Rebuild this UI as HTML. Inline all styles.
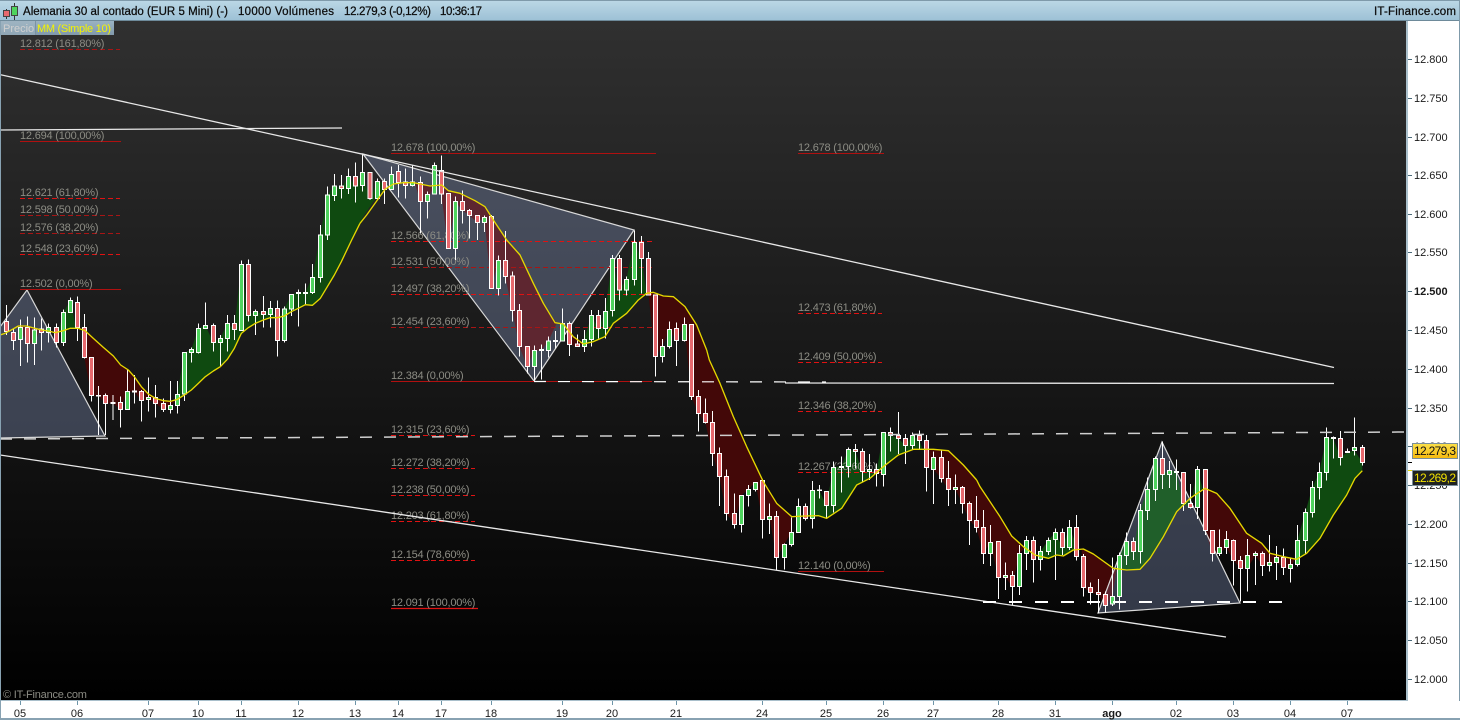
<!DOCTYPE html>
<html lang="es">
<head>
<meta charset="utf-8">
<title>Alemania 30 al contado</title>
<style>
html,body{margin:0;padding:0;background:#000;width:1460px;height:720px;overflow:hidden}
svg{display:block;font-family:"Liberation Sans",Arial,sans-serif}
.w{fill:none;stroke:#fff;stroke-width:3}
.g{fill:#4fd45e;stroke:#fff;stroke-width:3}
.r{fill:#e8696e;stroke:#fff;stroke-width:3}
.m{fill:none;stroke:#e6d800;stroke-width:4;stroke-linejoin:round}
.f{font-size:11px;fill:#8c8c84;letter-spacing:-.2px}
.ax{font-size:11px;fill:#1a1a1a}
.tt{font-size:11.5px;fill:#0c0c0c;stroke:#0c0c0c;stroke-width:.25px}
.sd{stroke:#e01212;stroke-width:1;stroke-dasharray:5 3}
.sdd{stroke:#a81515;stroke-width:1;stroke-dasharray:5 3}
.ss{stroke:#b01010;stroke-width:1}
.tl{stroke:#e8e8e8;stroke-width:1.3;fill:none}
</style>
</head>
<body>
<svg width="1460" height="720" viewBox="0 0 1460 720" xmlns="http://www.w3.org/2000/svg">
<defs>
<linearGradient id="bg" x1="0" y1="21" x2="0" y2="700" gradientUnits="userSpaceOnUse"><stop offset="0" stop-color="#303030"/><stop offset="1" stop-color="#000"/></linearGradient>
<linearGradient id="hd" x1="0" y1="0" x2="0" y2="1"><stop offset="0" stop-color="#bcd8e6"/><stop offset="1" stop-color="#9cc0d5"/></linearGradient>
<linearGradient id="tg" x1="0" y1="0" x2="0" y2="1"><stop offset="0" stop-color="#9fb4c2"/><stop offset="1" stop-color="#90a7b6"/></linearGradient>
<linearGradient id="tm" x1="0" y1="0" x2="0" y2="1"><stop offset="0" stop-color="#9ab2c2"/><stop offset="1" stop-color="#8199ac"/></linearGradient>
<linearGradient id="ye" x1="0" y1="0" x2="0" y2="1"><stop offset="0" stop-color="#fbe04a"/><stop offset="1" stop-color="#f6b90e"/></linearGradient>
<clipPath id="tri"><polygon points="0,327 27,290 105,436 0,438"/><polygon points="363,154 634,230 534,381"/><polygon points="1098,613 1162,442 1240,603"/></clipPath>
<g id="G">
<g transform="translate(0 240) scale(.33333)">
<path d="M175 275L190 217 211 181 228 265 210 265 190 272z"/>
<path d="M532 478L532 463 553 338 574 329 595 265 616 256 640 307 661 295 682 251 703 268 724 73 745 226 766 214 790 223 811 205 832 240 853 207 874 163 895 158 916 157 937 112 961 -15 982 -135 1003 -162 1024 -156 1045 -189 1066 -162 1087 -204 1110 -123 1132 -177 1165 -165 1130 -130 1090 -70 1055 0 1024 65 1003 105 982 140 961 175 937 196 916 194 895 205 874 215 853 228 832 233 811 233 790 240 766 250 745 263 724 280 703 325 682 358 661 380 640 393 616 410 595 430 574 450 553 465z"/>
</g>
<g transform="translate(360 140) scale(.33333)">
<path d="M668 612L673 598 694 526 715 566 736 514 757 355 778 450 799 418 823 307 844 355 860 460 835 480 800 520 760 550 735 590 700 605z"/>
</g>
<g transform="translate(680 360) scale(.33333)">
<path d="M385 467L397 391 418 391 439 437 460 322 484 319 505 268 526 274 547 335 568 328 589 340 610 217 631 226 655 235 676 257 697 226 718 241 728 268 700 268 655 285 610 320 570 355 530 375 485 445 440 475 415 467z"/>
</g>
<g transform="translate(980 400) scale(.33333)">
<path d="M135 445L139 421 160 478 181 454 205 421 226 397 247 442 268 382 295 448 280 450 250 468 230 465 205 475 165 465z"/>
<path d="M412 507L418 466 439 424 460 454 481 331 502 268 526 175 547 223 568 211 589 214 610 312 631 322 652 208 668 266 630 295 590 335 550 410 510 475 480 508 440 510z"/>
<path d="M950 478L952 421 976 337 997 262 1018 217 1039 112 1060 115 1081 172 1102 157 1123 151 1147 187 1147 212 1125 235 1100 285 1060 345 1020 415 980 460z"/>
</g>
</g>
<g id="R">
<g transform="translate(0 240) scale(.33333)">
<path d="M55 258L82 310 103 310 120 270 80 258z"/>
<path d="M245 266L253 353 274 466 295 468 316 490 339 490 361 508 382 454 403 456 424 482 445 479 466 490 490 508 511 496 530 480 511 484 490 482 466 475 445 462 424 440 403 410 385 390 362 375 340 348 310 322 280 295 255 272z"/>
</g>
<g transform="translate(360 140) scale(.33333)">
<path d="M165 130L181 184 202 184 222 137 210 138 180 132z"/>
<path d="M244 136L244 162 265 325 286 184 307 211 328 226 352 248 373 232 394 445 415 361 436 410 457 512 478 620 502 680 523 631 544 632 565 603 590 550 550 490 520 430 480 345 440 300 400 240 375 200 345 182 300 160 265 152z"/>
<path d="M615 555L628 613 652 620 668 612 640 590z"/>
</g>
<g transform="translate(680 360) scale(.33333)">
<path d="M-95 -200L-74 -10 -53 -41 -32 -92 -11 -58 13 -107 34 110 55 160 76 188 97 280 118 350 139 460 163 493 184 406 205 388 226 367 247 478 268 469 289 593 313 553 334 517 338 470 290 430 250 365 200 260 160 170 120 70 88 0 80 -30 50 -105 15 -160 -20 -190 -50 -192 -80 -203z"/>
</g>
<g transform="translate(980 400) scale(.33333)">
<path d="M-165 148L-161 202 -140 208 -116 236 -95 268 -74 268 -53 310 -32 362 -11 382 10 460 31 427 55 532 76 532 97 559 118 460 135 445 130 440 95 408 60 350 30 305 0 260 -10 240 -50 195 -95 152 -140 148z"/>
<path d="M305 447L310 562 331 577 355 583 376 616 397 589 410 507 400 505 340 462z"/>
<path d="M672 265L676 391 697 460 718 460 739 442 760 481 781 505 802 505 826 466 847 496 868 496 889 487 910 502 931 505 945 478 910 470 870 460 845 430 800 400 750 325 710 280z"/>
</g>
</g>
</defs>

<!-- chart background -->
<rect x="0" y="21" width="1407" height="681" fill="url(#bg)"/>

<!-- MA cloud -->
<use href="#G" fill="#0f4a10"/>
<use href="#R" fill="#430808"/>

<!-- triangles -->
<polygon points="0,327 27,290 105,436 0,438" fill="#8d9ecb" fill-opacity=".34"/>
<polygon points="363,154 634,230 534,381" fill="#8d9ecb" fill-opacity=".34"/>
<polygon points="1098,613 1162,442 1240,603" fill="#8d9ecb" fill-opacity=".34"/>
<g clip-path="url(#tri)">
<use href="#G" fill="#205f2a"/>
<use href="#R" fill="#5e2630"/>
</g>
<g fill="none" stroke="#d8d8d8" stroke-width="1.2">
<polyline points="0,327 27,290 105,436 0,438"/>
<polygon points="363,154 634,230 534,381"/>
<polygon points="1098,613 1162,442 1240,603"/>
</g>

<!-- fibonacci levels -->
<g>
<line x1="20" y1="49.5" x2="120" y2="49.5" class="sdd"/>
<line x1="20" y1="141.5" x2="121" y2="141.5" class="ss"/>
<line x1="20" y1="198.5" x2="120" y2="198.5" class="sd"/>
<line x1="20" y1="215.5" x2="120" y2="215.5" class="sdd"/>
<line x1="20" y1="233.5" x2="120" y2="233.5" class="sdd"/>
<line x1="20" y1="254.5" x2="120" y2="254.5" class="sd"/>
<line x1="20" y1="289.5" x2="121" y2="289.5" class="ss"/>
<line x1="391" y1="153.5" x2="656" y2="153.5" class="ss"/>
<line x1="391" y1="241.5" x2="652" y2="241.5" class="sd"/>
<line x1="391" y1="267.5" x2="652" y2="267.5" class="sdd"/>
<line x1="391" y1="294.5" x2="652" y2="294.5" class="sd"/>
<line x1="391" y1="327.5" x2="652" y2="327.5" class="sdd"/>
<line x1="391" y1="381.5" x2="652" y2="381.5" class="ss"/>
<line x1="391" y1="435.5" x2="475" y2="435.5" class="sd"/>
<line x1="391" y1="468.5" x2="475" y2="468.5" class="sd"/>
<line x1="391" y1="495.5" x2="475" y2="495.5" class="sd"/>
<line x1="391" y1="521.5" x2="475" y2="521.5" class="sd"/>
<line x1="391" y1="560.5" x2="475" y2="560.5" class="sd"/>
<line x1="391" y1="608.5" x2="478" y2="608.5" stroke="#e01212" stroke-width="1.2"/>
<line x1="798" y1="153.5" x2="884" y2="153.5" class="ss"/>
<line x1="798" y1="313.5" x2="882" y2="313.5" class="sd"/>
<line x1="798" y1="362.5" x2="882" y2="362.5" class="sd"/>
<line x1="798" y1="411.5" x2="882" y2="411.5" class="sd"/>
<line x1="798" y1="472.5" x2="882" y2="472.5" class="sd"/>
<line x1="798" y1="571.5" x2="884" y2="571.5" class="ss"/>
</g>
<g class="f">
<text x="20" y="47">12.812 (161,80%)</text>
<text x="20" y="139">12.694 (100,00%)</text>
<text x="20" y="196">12.621 (61,80%)</text>
<text x="20" y="213">12.598 (50,00%)</text>
<text x="20" y="231">12.576 (38,20%)</text>
<text x="20" y="252">12.548 (23,60%)</text>
<text x="20" y="287">12.502 (0,00%)</text>
<text x="391" y="151">12.678 (100,00%)</text>
<text x="391" y="239">12.566 (61,80%)</text>
<text x="391" y="265">12.531 (50,00%)</text>
<text x="391" y="292">12.497 (38,20%)</text>
<text x="391" y="325">12.454 (23,60%)</text>
<text x="391" y="379">12.384 (0,00%)</text>
<text x="391" y="433">12.315 (23,60%)</text>
<text x="391" y="466">12.272 (38,20%)</text>
<text x="391" y="493">12.238 (50,00%)</text>
<text x="391" y="519">12.203 (61,80%)</text>
<text x="391" y="558">12.154 (78,60%)</text>
<text x="391" y="606">12.091 (100,00%)</text>
<text x="798" y="151">12.678 (100,00%)</text>
<text x="798" y="311">12.473 (61,80%)</text>
<text x="798" y="360">12.409 (50,00%)</text>
<text x="798" y="409">12.346 (38,20%)</text>
<text x="798" y="470">12.267 (23,60%)</text>
<text x="798" y="569">12.140 (0,00%)</text>
</g>

<!-- candles -->
<g shape-rendering="crispEdges">
<g transform="translate(0 240) scale(.33333)">
<path class="w" d="M19 195V285M40 265V330M61 238V378M82 230V368M103 232V375M124 236V332M145 250V308M169 250V322M190 208V318M211 172V218M232 170V303M253 222V355M274 352V485M295 438V585M316 460V585M339 465V540M361 470V563M382 388V508M403 405V490M424 450V545M445 412V515M466 435V532M490 475V516M511 423V520M532 423V520M553 338V483M574 322V368M595 250V340M616 188V263M640 250V335M661 285V380M682 225V335M703 225V300M724 62V272M745 58V245M766 208V285M790 168V262M811 183V262M832 182V350M853 200V308M874 162V228M895 148V260M916 130V195M937 72V162M961 -45V128"/>
<path class="g" d="M55 263h12V298h-12zM97 270h12V310h-12zM139 262h12V278h-12zM184 217h12V308h-12zM205 181h12V217h-12zM376 454h12V508h-12zM439 472h12V479h-12zM505 496h12V508h-12zM526 463h12V496h-12zM547 338h12V462h-12zM568 329h12V338h-12zM589 265h12V338h-12zM610 256h12V265h-12zM655 295h12V307h-12zM676 251h12V295h-12zM718 73h12V272h-12zM760 214h12V226h-12zM805 205h12V223h-12zM847 207h12V301h-12zM868 163h12V207h-12zM889 158h12V161h-12zM910 157h12V160h-12zM931 112h12V157h-12zM955 -15h12V112h-12z"/>
<path class="r" d="M13 245h12V275h-12zM34 278h12V302h-12zM76 262h12V310h-12zM118 267h12V278h-12zM163 262h12V308h-12zM226 187h12V262h-12zM247 262h12V353h-12zM268 352h12V466h-12zM289 466h12V468h-12zM310 466h12V490h-12zM333 487h12V490h-12zM355 487h12V508h-12zM397 453h12V456h-12zM418 454h12V482h-12zM460 472h12V490h-12zM484 490h12V508h-12zM634 256h12V307h-12zM697 250h12V268h-12zM739 73h12V226h-12zM784 214h12V223h-12zM826 205h12V301h-12z"/>
</g>
<g transform="scale(.33333)">
<path class="w" d="M982 560V720M1003 522V603M1024 525V595M1045 505V582M1066 488V608"/>
<path class="g" d="M976 585h12V705h-12zM997 558h12V586h-12zM1039 530h12V566h-12z"/>
<path class="r" d="M1018 558h12V565h-12zM1060 530h12V558h-12z"/>
</g>
<g transform="translate(360 140) scale(.33333)">
<path class="w" d="M8 42V155M30 97V180M52 115V180M73 115V192M94 80V150M115 75V172M136 85V175M157 75V140M181 110V280M202 155V235M223 68V163M244 47V192M265 160V325M286 170V360M307 152V250M328 207V295M352 225V300M373 226V276M394 225V445M415 346V467M436 273V430M457 395V545M478 492V650M502 618V700M523 616V722M544 613V718M565 590V652M586 573V625M607 505V605M628 545V648M652 583V620M673 570V636M694 510V620M715 510V595M736 474V595M757 345V530M778 345V482M799 410V467M823 272V437M844 288V460M865 336V465M886 465V710M907 597V668M928 545V625M949 547V678M973 532V605M994 553V780"/>
<path class="g" d="M2 97h12V136h-12zM46 124h12V176h-12zM88 103h12V149h-12zM151 126h12V136h-12zM196 163h12V184h-12zM217 76h12V162h-12zM280 184h12V325h-12zM367 232h12V248h-12zM409 361h12V445h-12zM517 631h12V680h-12zM538 629h12V632h-12zM559 603h12V632h-12zM580 601h12V604h-12zM601 550h12V603h-12zM667 598h12V620h-12zM688 526h12V598h-12zM730 514h12V566h-12zM751 355h12V512h-12zM793 418h12V450h-12zM817 307h12V418h-12zM901 619h12V650h-12zM922 568h12V620h-12zM967 553h12V602h-12z"/>
<path class="r" d="M24 97h12V176h-12zM67 124h12V149h-12zM109 94h12V127h-12zM130 126h12V136h-12zM175 127h12V184h-12zM238 92h12V162h-12zM259 160h12V325h-12zM301 184h12V211h-12zM322 211h12V226h-12zM346 226h12V248h-12zM388 230h12V445h-12zM430 361h12V410h-12zM451 408h12V512h-12zM472 512h12V620h-12zM496 620h12V680h-12zM622 550h12V613h-12zM646 612h12V620h-12zM709 526h12V566h-12zM772 355h12V450h-12zM838 307h12V355h-12zM859 355h12V465h-12zM880 465h12V650h-12zM943 565h12V602h-12zM988 553h12V770h-12z"/>
</g>
<g transform="translate(680 360) scale(.33333)">
<path class="w" d="M55 90V215M76 115V190M97 153V318M118 262V438M139 328V482M163 400V505M184 405V518M205 375V440M226 366V395M247 360V535M268 430V522M289 453V630M313 550V628M334 472V560M355 415V518M376 430V482M397 363V505M418 375V415M439 395V473M460 305V457M484 290V397M505 262V353M526 252V325M547 265V365M568 282V360M589 310V380M610 216V380M631 202V275M655 156V282M676 222V312M697 217V268M718 212V270M739 225V395M760 275V432M784 268V367M805 303V438M826 343V432M847 378V460M868 425V555M889 408V518"/>
<path class="g" d="M178 406h12V493h-12zM199 388h12V406h-12zM220 367h12V388h-12zM262 469h12V478h-12zM307 553h12V593h-12zM328 517h12V553h-12zM349 439h12V517h-12zM391 391h12V475h-12zM412 390h12V392h-12zM454 322h12V437h-12zM478 319h12V322h-12zM499 268h12V319h-12zM562 328h12V334h-12zM604 217h12V343h-12zM691 226h12V257h-12zM754 292h12V328h-12zM820 382h12V388h-12z"/>
<path class="r" d="M49 110h12V160h-12zM70 160h12V188h-12zM91 188h12V280h-12zM112 280h12V350h-12zM133 349h12V460h-12zM157 460h12V493h-12zM241 361h12V478h-12zM283 469h12V593h-12zM370 439h12V475h-12zM433 394h12V437h-12zM520 268h12V274h-12zM541 274h12V335h-12zM583 328h12V340h-12zM625 217h12V226h-12zM649 226h12V235h-12zM670 235h12V257h-12zM712 226h12V241h-12zM733 241h12V322h-12zM778 292h12V356h-12zM799 356h12V388h-12zM841 382h12V430h-12zM862 430h12V482h-12zM883 481h12V502h-12z"/>
</g>
<g transform="translate(980 400) scale(.33333)">
<path class="w" d="M10 330V492M31 375V498M55 424V597M76 487V570M97 513V615M118 435V585M139 408V510M160 410V548M181 438V512M205 412V465M226 385V540M247 385V465M268 360V450M289 345V482M310 462V590M331 548V614M355 537V640M376 575V638M397 472V618M418 457V628M439 397V495M460 412V480M481 312V490M502 232V360M526 170V303M547 125V267M568 183V264M589 178V270M610 217V333M631 252V325M652 198V357M676 208V405M697 390V485M718 388V468M739 393V462M760 418V557M781 468V605M802 417V575M826 455V555M847 455V528M868 405V515M889 438V540M910 445V525M931 472V548M952 375V500M976 325V460M997 243V352M1018 187V298M1039 82V242M1060 110V175M1081 93V197M1102 145V157M1123 52V167M1147 135V197"/>
<path class="g" d="M25 427h12V460h-12zM70 526h12V532h-12zM112 460h12V559h-12zM133 421h12V460h-12zM175 454h12V478h-12zM199 421h12V454h-12zM220 397h12V418h-12zM262 382h12V442h-12zM391 589h12V612h-12zM412 466h12V589h-12zM433 424h12V466h-12zM475 331h12V454h-12zM496 268h12V331h-12zM520 175h12V268h-12zM562 211h12V223h-12zM583 214h12V217h-12zM646 208h12V322h-12zM712 442h12V460h-12zM733 418h12V442h-12zM796 466h12V505h-12zM820 460h12V466h-12zM862 487h12V496h-12zM883 472h12V487h-12zM925 493h12V505h-12zM946 421h12V493h-12zM970 337h12V421h-12zM991 262h12V337h-12zM1012 217h12V262h-12zM1033 112h12V217h-12zM1054 112h12V115h-12zM1096 154h12V157h-12zM1117 142h12V151h-12z"/>
<path class="r" d="M4 382h12V460h-12zM49 424h12V532h-12zM91 526h12V559h-12zM154 421h12V478h-12zM241 397h12V442h-12zM283 382h12V469h-12zM304 469h12V562h-12zM325 562h12V577h-12zM349 577h12V583h-12zM370 583h12V616h-12zM454 424h12V454h-12zM541 175h12V223h-12zM604 217h12V310h-12zM625 310h12V322h-12zM670 208h12V391h-12zM691 391h12V460h-12zM754 421h12V481h-12zM775 481h12V505h-12zM841 460h12V496h-12zM904 472h12V502h-12zM1075 115h12V172h-12zM1141 142h12V187h-12z"/>
</g>
</g>

<!-- trend lines -->
<g class="tl">
<line x1="0" y1="74.6" x2="1334" y2="367.5"/>
<line x1="0" y1="455" x2="1226" y2="637"/>
<line x1="0" y1="130" x2="342" y2="128"/>
<line x1="785" y1="383" x2="1334" y2="383.5"/>
</g>
<line x1="0" y1="439" x2="1406" y2="432" stroke="#cfcfcf" stroke-width="1.5" stroke-dasharray="12 12"/>
<line x1="534" y1="381.5" x2="826" y2="382" stroke="#fff" stroke-width="1.2" stroke-dasharray="12 12"/>
<line x1="983" y1="602" x2="1282" y2="602" stroke="#fff" stroke-width="2" stroke-dasharray="13 13"/>

<!-- moving average -->
<g transform="translate(0 240) scale(.33333)"><polyline class="m" points="0,285 15,280 30,272 55,258 80,258 105,265 125,270 145,273 165,278 190,272 210,265 235,265 255,272 280,295 310,322 340,348 362,375 385,390 403,410 424,440 445,462 466,475 490,482 511,484 532,478 553,465 574,450 595,430 616,410 640,393 661,380 682,358 703,325 724,280 745,263 766,250 790,240 811,233 832,233 853,228 874,215 895,205 916,194 937,196 961,175 982,140 1003,105 1024,65 1055,0 1080,-50"/></g>
<g transform="translate(360 140) scale(.33333)"><polyline class="m" points="0,250 20,225 45,190 75,148 100,132 130,128 160,128 180,132 210,138 245,135 265,152 300,160 345,182 375,200 400,240 440,300 480,345 520,430 550,490 585,548 610,552 640,590 670,612 700,605 735,590 760,550 800,520 835,480 860,460 880,457 910,468 940,470 975,500 1010,555 1040,630"/></g>
<g transform="translate(680 360) scale(.33333)"><polyline class="m" points="80,-30 88,0 120,70 160,170 200,260 250,365 290,430 335,470 375,468 415,467 440,475 485,445 530,375 570,355 610,320 655,285 700,268 760,268 805,272 850,315 890,360"/></g>
<g transform="translate(980 400) scale(.33333)"><polyline class="m" points="-10,240 0,260 30,305 60,350 95,408 130,440 165,465 205,475 230,465 250,468 280,450 310,447 340,462 400,505 440,510 480,508 510,475 550,410 590,335 630,295 675,265 710,280 750,325 800,400 845,430 870,460 910,470 950,478 980,460 1020,415 1060,345 1100,285 1125,235 1147,212"/></g>

<!-- title bar -->
<rect x="0" y="0" width="1460" height="21" fill="url(#hd)"/>
<rect x="0" y="0" width="1460" height="1" fill="#7f9aaa"/>
<rect x="0" y="20" width="1460" height="1" fill="#6e8a9a"/>
<g>
<line x1="6.5" y1="9" x2="6.5" y2="19" stroke="#333"/>
<rect x="3.5" y="10.5" width="6" height="6" fill="#e8696e" stroke="#444"/>
<line x1="14.5" y1="3" x2="14.5" y2="20" stroke="#333"/>
<rect x="11.5" y="6.5" width="6" height="9" fill="#4fd45e" stroke="#444"/>
</g>
<g class="tt">
<text x="23" y="15" textLength="205" lengthAdjust="spacing">Alemania 30 al contado (EUR 5 Mini) (-)</text>
<text x="238" y="15" textLength="96" lengthAdjust="spacing">10000 Volúmenes</text>
<text x="344" y="15" textLength="87" lengthAdjust="spacing">12.279,3 (-0,12%)</text>
<text x="440" y="15" textLength="42" lengthAdjust="spacing">10:36:17</text>
<text x="1374" y="15" textLength="82" lengthAdjust="spacing">IT-Finance.com</text>
</g>

<!-- legend tags -->
<rect x="1" y="21" width="34" height="14" fill="url(#tg)"/>
<rect x="35" y="21" width="79" height="14" fill="url(#tm)"/>
<rect x="35" y="21" width="1" height="14" fill="#7a92a2"/>
<text x="3" y="32" font-size="11" fill="#d0d0d0">Precio</text>
<text x="37" y="32" font-size="11" fill="#f4f400" textLength="74" lengthAdjust="spacing">MM (Simple 10)</text>

<!-- right axis -->
<rect x="1407" y="21" width="53" height="699" fill="#fff"/>
<rect x="1406" y="21" width="2" height="681" fill="#a9bfcb"/>
<rect x="1459" y="0" width="1" height="720" fill="#7f9aaa"/>
<g stroke="#4a6a7a" stroke-width="1">
<line x1="1408" y1="59.5" x2="1412" y2="59.5"/><line x1="1408" y1="98.5" x2="1412" y2="98.5"/><line x1="1408" y1="137.5" x2="1412" y2="137.5"/><line x1="1408" y1="175.5" x2="1412" y2="175.5"/><line x1="1408" y1="214.5" x2="1412" y2="214.5"/><line x1="1408" y1="252.5" x2="1412" y2="252.5"/><line x1="1408" y1="291.5" x2="1412" y2="291.5"/><line x1="1408" y1="330.5" x2="1412" y2="330.5"/><line x1="1408" y1="369.5" x2="1412" y2="369.5"/><line x1="1408" y1="408.5" x2="1412" y2="408.5"/><line x1="1408" y1="446.5" x2="1412" y2="446.5"/><line x1="1408" y1="485.5" x2="1412" y2="485.5"/><line x1="1408" y1="524.5" x2="1412" y2="524.5"/><line x1="1408" y1="563.5" x2="1412" y2="563.5"/><line x1="1408" y1="601.5" x2="1412" y2="601.5"/><line x1="1408" y1="640.5" x2="1412" y2="640.5"/><line x1="1408" y1="679.5" x2="1412" y2="679.5"/>
</g>
<line x1="1408" y1="462.5" x2="1412" y2="462.5" stroke="#000"/>
<line x1="1408" y1="470.5" x2="1412" y2="470.5" stroke="#e6d800"/>
<g class="ax">
<text x="1414" y="63">12.800</text>
<text x="1414" y="102">12.750</text>
<text x="1414" y="141">12.700</text>
<text x="1414" y="179">12.650</text>
<text x="1414" y="218">12.600</text>
<text x="1414" y="256">12.550</text>
<text x="1414" y="295" font-weight="bold">12.500</text>
<text x="1414" y="334">12.450</text>
<text x="1414" y="373">12.400</text>
<text x="1414" y="412">12.350</text>
<text x="1414" y="450">12.300</text>
<text x="1414" y="489">12.250</text>
<text x="1414" y="528">12.200</text>
<text x="1414" y="567">12.150</text>
<text x="1414" y="605">12.100</text>
<text x="1414" y="644">12.050</text>
<text x="1414" y="683">12.000</text>
</g>
<rect x="1412.5" y="443.5" width="45" height="15" fill="url(#ye)" stroke="#7b8f9b"/>
<text x="1414" y="455" font-size="12" fill="#111" textLength="42" lengthAdjust="spacing">12.279,3</text>
<rect x="1412.5" y="470.5" width="45" height="15" fill="#1f2220" stroke="#7b8f9b"/>
<text x="1414" y="482" font-size="12" fill="#f0e000" textLength="42" lengthAdjust="spacing">12.269,2</text>

<!-- bottom axis -->
<rect x="0" y="701" width="1460" height="19" fill="#fff"/>
<rect x="0" y="700" width="1407" height="1" fill="#a9bfcb"/>
<rect x="0" y="718" width="1460" height="2" fill="#88a2b2"/>
<rect x="0" y="21" width="1" height="699" fill="#88a2b2"/>
<text x="3" y="698" font-size="11" fill="#8c8c84" letter-spacing="-.2">© IT-Finance.com</text>
<g stroke="#6f95a8">
<line x1="20.5" y1="701" x2="20.5" y2="705"/><line x1="77.5" y1="701" x2="77.5" y2="705"/><line x1="148.5" y1="701" x2="148.5" y2="705"/><line x1="198.5" y1="701" x2="198.5" y2="705"/><line x1="241.5" y1="701" x2="241.5" y2="705"/><line x1="298.5" y1="701" x2="298.5" y2="705"/><line x1="355.5" y1="701" x2="355.5" y2="705"/><line x1="398.5" y1="701" x2="398.5" y2="705"/><line x1="441.5" y1="701" x2="441.5" y2="705"/><line x1="491.5" y1="701" x2="491.5" y2="705"/><line x1="562.5" y1="701" x2="562.5" y2="705"/><line x1="612.5" y1="701" x2="612.5" y2="705"/><line x1="676.5" y1="701" x2="676.5" y2="705"/><line x1="762.5" y1="701" x2="762.5" y2="705"/><line x1="826.5" y1="701" x2="826.5" y2="705"/><line x1="883.5" y1="701" x2="883.5" y2="705"/><line x1="933.5" y1="701" x2="933.5" y2="705"/><line x1="998.5" y1="701" x2="998.5" y2="705"/><line x1="1055.5" y1="701" x2="1055.5" y2="705"/><line x1="1112.5" y1="701" x2="1112.5" y2="705"/><line x1="1176.5" y1="701" x2="1176.5" y2="705"/><line x1="1233.5" y1="701" x2="1233.5" y2="705"/><line x1="1290.5" y1="701" x2="1290.5" y2="705"/><line x1="1347.5" y1="701" x2="1347.5" y2="705"/>
</g>
<g class="ax" text-anchor="middle">
<text x="20" y="717">05</text><text x="77" y="717">06</text><text x="148" y="717">07</text><text x="198" y="717">10</text><text x="241" y="717">11</text><text x="298" y="717">12</text><text x="355" y="717">13</text><text x="398" y="717">14</text><text x="441" y="717">17</text><text x="491" y="717">18</text><text x="562" y="717">19</text><text x="612" y="717">20</text><text x="676" y="717">21</text><text x="762" y="717">24</text><text x="826" y="717">25</text><text x="883" y="717">26</text><text x="933" y="717">27</text><text x="998" y="717">28</text><text x="1055" y="717">31</text><text x="1112" y="717" font-weight="bold">ago</text><text x="1176" y="717">02</text><text x="1233" y="717">03</text><text x="1290" y="717">04</text><text x="1347" y="717">07</text>
</g>
</svg>
</body>
</html>
